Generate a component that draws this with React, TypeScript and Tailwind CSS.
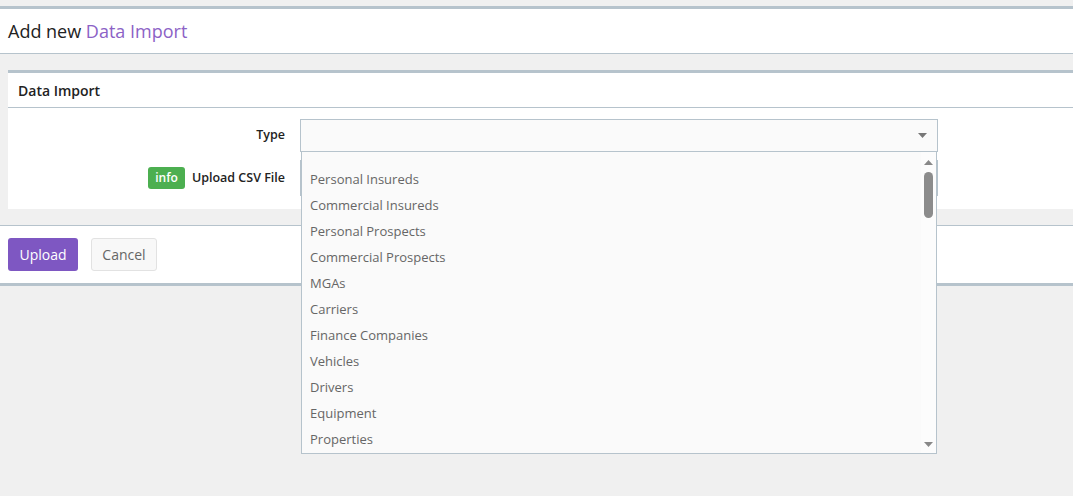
const options = [
  "Personal Insureds",
  "Commercial Insureds",
  "Personal Prospects",
  "Commercial Prospects",
  "MGAs",
  "Carriers",
  "Finance Companies",
  "Vehicles",
  "Drivers",
  "Equipment",
  "Properties",
];

export default function App() {
  return (
    <div className="min-h-[496px] bg-[#f0f0f0] pt-[6px] font-['Open_Sans',sans-serif]">
      {/* Page title */}
      <div className="flex h-[48px] items-center border-t-[3px] border-b border-[#b6c3cc] bg-white px-2">
        <h1 className="text-[18px] text-[#222]">
          Add new <span className="text-[#8c62c6]">Data Import</span>
        </h1>
      </div>

      {/* Panel */}
      <div className="mt-4 ml-2 border-t-[3px] border-[#b6c3cc] bg-white">
        <div className="flex h-[35px] items-center border-b border-[#b6c3cc] px-2.5">
          <h2 className="text-[14px] font-semibold text-[#222]">Data Import</h2>
        </div>

        <div className="pt-[11px] pb-[13px]">
          {/* Type row */}
          <div className="flex items-center">
            <label className="w-[277px] text-right text-[12.5px] font-semibold text-[#222]">
              Type
            </label>
            <div className="relative ml-[15px] w-[638px]">
              <div className="flex h-[33px] items-center justify-end border border-[#b6c3cc] bg-[#fafafa] pr-[10px]">
                <svg width="9" height="5" viewBox="0 0 9 5">
                  <path d="M0 0h9L4.5 5z" fill="#777" />
                </svg>
              </div>

              {/* Open dropdown */}
              <div className="absolute top-full left-px z-10 flex h-[302px] w-[636px] border border-t-0 border-[#b6c3cc] bg-[#fafafa]">
                <ul className="flex-1 overflow-hidden">
                  <li className="h-[15px]" />
                  {options.map((o) => (
                    <li
                      key={o}
                      className="flex h-[26px] items-center pl-2 text-[13px] text-[#666]"
                    >
                      {o}
                    </li>
                  ))}
                </ul>
                <div className="flex w-[15px] flex-col items-center bg-[#fcfcfc] pt-[8px] pb-[6px]">
                  <svg width="9" height="5" viewBox="0 0 9 5">
                    <path d="M4.5 0L9 5H0z" fill="#888" />
                  </svg>
                  <div className="mt-[7px] h-[46px] w-[9px] rounded-full bg-[#8c8c8c]" />
                  <div className="flex-1" />
                  <svg width="9" height="5" viewBox="0 0 9 5">
                    <path d="M0 0h9L4.5 5z" fill="#888" />
                  </svg>
                </div>
              </div>
            </div>
          </div>

          {/* Upload row */}
          <div className="mt-[8px] flex items-center">
            <div className="flex w-[277px] items-center justify-end gap-[7px]">
              <span className="rounded-[3px] bg-[#4caf50] px-[7px] py-[2px] text-[12px] font-semibold text-white">
                info
              </span>
              <label className="text-[12.5px] font-semibold text-[#222]">
                Upload CSV File
              </label>
            </div>
            <div className="ml-[15px] h-[36px] w-[638px] border border-[#b6c3cc] bg-white" />
          </div>
        </div>
      </div>

      {/* Footer actions */}
      <div className="mt-[16px] flex h-[61px] items-start gap-[13px] border-t border-b-[3px] border-[#b6c3cc] bg-white px-2 pt-[12px]">
        <button className="h-[33px] w-[70px] rounded-[3px] bg-[#7e57c2] text-[14px] text-white">
          Upload
        </button>
        <button className="h-[33px] w-[66px] rounded-[3px] border border-[#e2e2e2] bg-[#f8f8f8] text-[14px] text-[#666]">
          Cancel
        </button>
      </div>
    </div>
  );
}
